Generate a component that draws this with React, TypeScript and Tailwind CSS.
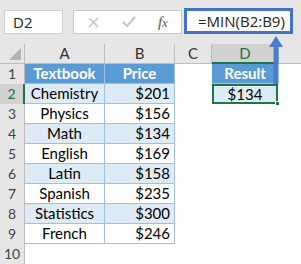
const rows = [
  { n: 1, a: "Textbook", b: "Price", d: "Result", head: true },
  { n: 2, a: "Chemistry", b: "$201", d: "$134" },
  { n: 3, a: "Physics", b: "$156" },
  { n: 4, a: "Math", b: "$134" },
  { n: 5, a: "English", b: "$169" },
  { n: 6, a: "Latin", b: "$158" },
  { n: 7, a: "Spanish", b: "$235" },
  { n: 8, a: "Statistics", b: "$300" },
  { n: 9, a: "French", b: "$246" },
  { n: 10 },
];

const Row = ({ r }: { r: (typeof rows)[number] }) => {
  const active = r.n === 2;
  const inTable = r.n <= 9;
  const band = r.head
    ? "bg-[#5b9bd5] text-white font-bold"
    : r.n % 2 === 0
      ? "bg-[#ddebf7] text-black"
      : "bg-white text-black";
  return (
    <div className="flex h-[20px]">
      <div
        className={
          active
            ? "w-[25px] shrink-0 flex items-center justify-center bg-[#d2d2d2] text-[#217346] border-r-2 border-[#217346] text-[14px]"
            : "w-[25px] shrink-0 flex items-center justify-center bg-[#e6e6e6] text-[#444] border-r border-[#bdbdbd] text-[14px]"
        }
      >
        {r.n}
      </div>
      {inTable ? (
        <>
          <div className={`w-[80px] shrink-0 flex items-center justify-center ${band} border-b border-r border-[#9bc2e6]`}>
            {r.a}
          </div>
          <div
            className={`w-[70px] shrink-0 flex items-center ${r.head ? "justify-center" : "justify-end pr-[4px]"} ${band} border-b border-r border-[#9bc2e6]`}
          >
            {r.b}
          </div>
        </>
      ) : (
        <div className="w-[150px] shrink-0 bg-white" />
      )}
      <div className="w-[37px] shrink-0 bg-white" />
      {r.d ? (
        r.head ? (
          <div className="w-[66px] shrink-0 flex items-center justify-center bg-[#5b9bd5] text-white font-bold border-b border-[#9bc2e6]">
            {r.d}
          </div>
        ) : (
          <div className="relative w-[66px] shrink-0 flex items-center justify-center bg-[#ddebf7] text-black border-2 border-[#217346]">
            {r.d}
            <div className="absolute right-[-4px] bottom-[-4px] w-[5px] h-[5px] bg-[#217346] border border-white" />
          </div>
        )
      ) : (
        <div className="w-[66px] shrink-0 bg-white" />
      )}
      <div className="flex-1 bg-white" />
    </div>
  );
};

export default function App() {
  return (
    <div
      className="relative w-[301px] h-[264px] overflow-hidden bg-white text-[15px] leading-none"
      style={{ fontFamily: "Lato, 'Open Sans', sans-serif" }}
    >
      {/* formula bar */}
      <div className="h-[44px] bg-[#e6e6e6] flex items-start pt-[8px]">
        <div
          className="ml-[4px] mt-[2px] w-[59px] h-[24px] bg-white border border-[#d0d0d0] flex items-center pl-[8px] text-[15px] text-[#222]"
          style={{ fontFamily: "'Open Sans', sans-serif" }}
        >
          D2
        </div>
        <div className="ml-[10px] mt-[2px] w-[109px] h-[24px] bg-white border border-[#c8c8c8] flex items-center">
          <svg width="11" height="11" viewBox="0 0 11 11" className="ml-[14px]">
            <path d="M1 1 L10 10 M10 1 L1 10" stroke="#c4c4c4" strokeWidth="1.5" />
          </svg>
          <svg width="14" height="12" viewBox="0 0 14 12" className="ml-[23px]">
            <path d="M1 6 L5 10 L13 1" stroke="#c4c4c4" strokeWidth="2" fill="none" />
          </svg>
          <span
            className="ml-[22px] text-[15px] italic text-[#555]"
            style={{ fontFamily: "'Liberation Serif', serif" }}
          >
            f<span className="text-[12px]">x</span>
          </span>
        </div>
        <div
          className="ml-[2px] w-[109px] h-[26px] bg-white border-[3px] border-[#4472c4] flex items-center pl-[11px] text-[15px] text-[#222]"
          style={{ fontFamily: "'Open Sans', sans-serif" }}
        >
          =MIN(B2:B9)
        </div>
      </div>

      {/* column header */}
      <div className="flex h-[20px] bg-[#e6e6e6] text-[#333] text-[15px]">
        <div className="w-[25px] shrink-0 relative border-r border-b border-[#bdbdbd]">
          <svg width="12" height="12" viewBox="0 0 12 12" className="absolute right-[3px] bottom-[3px]">
            <path d="M12 0 L12 12 L0 12 Z" fill="#b4b4b4" />
          </svg>
        </div>
        <div className="w-[80px] shrink-0 flex items-center justify-center border-r border-b border-[#bdbdbd]">A</div>
        <div className="w-[70px] shrink-0 flex items-center justify-center border-r border-b border-[#bdbdbd]">B</div>
        <div className="w-[37px] shrink-0 flex items-center justify-center border-r border-b border-[#bdbdbd]">C</div>
        <div className="w-[66px] shrink-0 flex items-center justify-center bg-[#d2d2d2] text-[#217346] border-b-2 border-[#217346]">D</div>
        <div className="flex-1 border-l border-b border-[#bdbdbd]" />
      </div>

      {rows.map((r) => (
        <Row key={r.n} r={r} />
      ))}

      {/* arrow */}
      <svg width="16" height="50" viewBox="0 0 16 50" className="absolute left-[268px] top-[35px]">
        <path d="M8 1 L15 12 L10.5 12 L10.5 49 L5.5 49 L5.5 12 L1 12 Z" fill="#4a7ecb" />
      </svg>
    </div>
  );
}
